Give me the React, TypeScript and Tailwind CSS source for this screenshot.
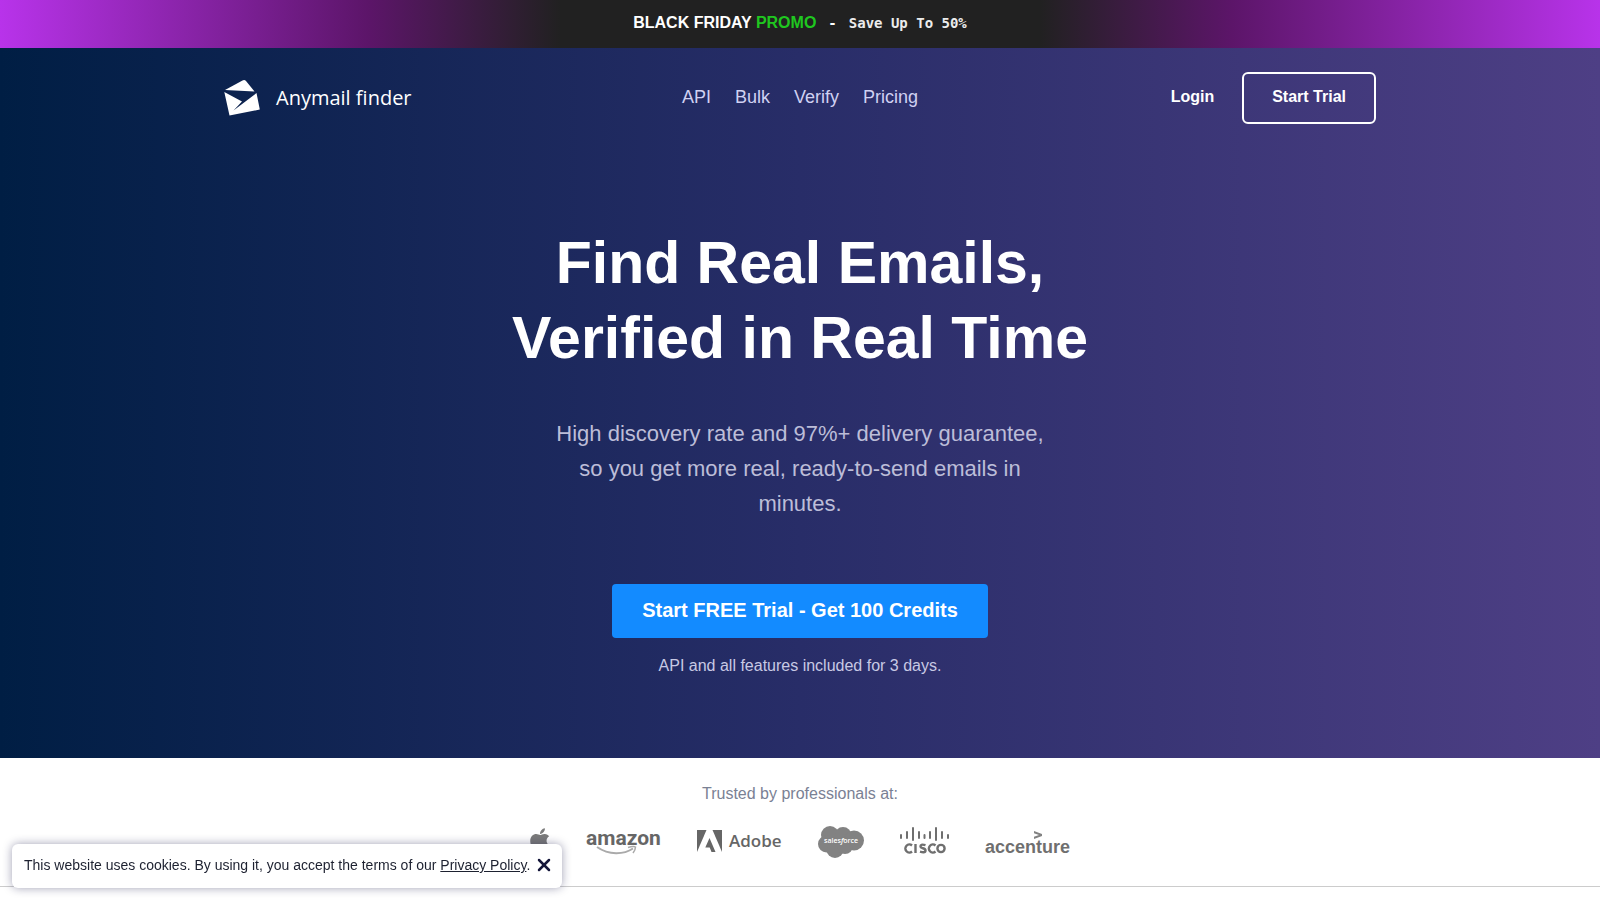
import { FaApple } from "react-icons/fa";
import { FiX } from "react-icons/fi";
import { useState } from "react";

const navLinks = ["API", "Bulk", "Verify", "Pricing"];

const PromoBanner = () => {
    return <a href="#promo" className="flex h-12 items-center justify-center bg-[linear-gradient(to_right,#b833ea_0%,#5c1569_23%,#212121_35%,#212121_65%,#5c1569_77%,#b833ea_100%)] pb-0.5 text-white">
        <span className="font-bold">BLACK FRIDAY <span className="text-[#1fc71f]">PROMO</span></span>
        <span className="ml-3 font-['DejaVu_Sans_Mono',monospace] text-sm font-bold">-</span>
        <span className="ml-3 font-['DejaVu_Sans_Mono',monospace] text-sm font-bold text-[#ececec]">Save Up To 50%</span>
    </a>
}

const Logo = () => {
    return <a href="#home" className="flex items-center gap-4 text-white">
        <svg width="36" height="36" viewBox="0 0 36 36" fill="currentColor" aria-hidden="true">
            <path d="M1 10 18.500 .5Q20.500-.5 22 1L30.500 11.500Z" />
            <path d="M.3 12 18 21.500 9.500 30.500 32.500 13 35.800 29.500 5.500 35.500Z" />
        </svg>
        <span className="font-['Open_Sans',sans-serif] text-xl">Anymail finder</span>
    </a>
}

const Header = () => {
    return <header className="mx-auto grid max-w-6xl grid-cols-3 items-center">
        <Logo />
        <nav className="flex justify-center gap-6 pb-0.5 text-lg text-[#d0d1f2]">
            {navLinks.map((link) => <a key={link} href={`#${link.toLowerCase()}`}>{link}</a>)}
        </nav>
        <div className="flex items-center justify-end gap-7 font-bold text-white">
            <a href="#login" className="pb-0.5">Login</a>
            <button type="button" className="h-13 rounded-md border-2 border-white px-7 pb-0.5">Start Trial</button>
        </div>
    </header>
}

const Hero = () => {
    return <div className="mt-[102px] flex flex-col items-center px-4 text-center">
        <h1 className="text-[59px] leading-[75px] font-bold text-white">
            Find Real Emails,<br />Verified in Real Time
        </h1>
        <p className="mt-10 max-w-lg text-[22px] leading-[35px] text-[#bcbdd8]">
            High discovery rate and 97%+ delivery guarantee, so you get more real, ready-to-send emails in minutes.
        </p>
        <button type="button" className="mt-[63px] h-[54px] rounded bg-[#138bff] px-[30px] pb-0.5 text-xl font-bold text-white">
            Start FREE Trial - Get 100 Credits
        </button>
        <p className="mt-4 text-base text-[#c8c9e4]">API and all features included for 3 days.</p>
    </div>
}

const AmazonLogo = () => {
    return <svg width="75" height="32" viewBox="0 0 75 32" role="img" aria-label="amazon">
        <text x="0" y="19" fontSize="21" fontWeight="700" fill="#666" className="font-['Roboto',sans-serif]">amazon</text>
        <path d="M11 21C23 29.500 38 28.500 47 22.500" fill="none" stroke="#aaa" strokeWidth="2" />
        <path d="M42 21.500C45 20.500 48 20 49.500 21 49.500 23 48.500 25 47 27" fill="none" stroke="#aaa" strokeWidth="1.500" />
    </svg>
}

const AdobeLogo = () => {
    return <svg width="85" height="32" viewBox="0 0 85 32" fill="#666" role="img" aria-label="Adobe">
        <path d="M0 4H9.500L0 26Z" />
        <path d="M15.500 4H25V26Z" />
        <path d="M12.500 12 18.500 26H14.500L12.700 21.500H8.300Z" />
        <text x="32" y="21" fontSize="17" fontWeight="600" className="font-['Open_Sans',sans-serif]">Adobe</text>
    </svg>
}

const SalesforceLogo = () => {
    return <svg width="46" height="32" viewBox="0 0 46 32" fill="#828282" role="img" aria-label="salesforce">
        <circle cx="12" cy="9" r="9" />
        <circle cx="25" cy="9.500" r="8.500" />
        <circle cx="36" cy="14.500" r="10" />
        <circle cx="8.500" cy="18" r="8.500" />
        <circle cx="17" cy="23.500" r="8.500" />
        <circle cx="27" cy="20" r="8" />
        <text x="6" y="17" fontSize="7" fontWeight="600" fill="#fff" className="font-['Open_Sans',sans-serif]">sales<tspan fontStyle="italic">f</tspan>orce</text>
    </svg>
}

const CiscoLogo = () => {
    return <svg width="49" height="32" viewBox="0 0 49 32" role="img" aria-label="cisco">
        <path d="M1 9V12M7 6V12M13 2V14M19 6V12M24.500 9V12M30 6V12M36 2V14M42 6V12M48 9V12" stroke="#6f6f6f" strokeWidth="2" strokeLinecap="round" />
        <g fill="none" stroke="#6f6f6f" strokeWidth="2.400">
            <path d="M12 19.500A4 4 0 1 0 12 25.500M15.500 18V27M25.500 19.200C21.500 18 20.500 19 20.500 20.300 20.500 23 25.500 21.500 25.500 24.500 25.500 27 22 26.200 20 25.600M35.500 19.500A4 4 0 1 0 35.500 25.500" />
            <circle cx="41" cy="22.500" r="3.600" />
        </g>
    </svg>
}

const AccentureLogo = () => {
    return <svg width="85" height="32" viewBox="0 0 85 32" fill="#6f6f6f" role="img" aria-label="accenture">
        <path d="M49 5 57 8V10L49 13V10.800L54 9 49 7.200Z" fill="#828282" />
        <text x="0" y="27" fontSize="18" fontWeight="700">accenture</text>
    </svg>
}

const TrustedBy = () => {
    return <section className="flex flex-col items-center border-b border-[#ccc] pt-6 pb-7">
        <p className="text-base text-[#7a8194]">Trusted by professionals at:</p>
        <div className="mt-5 flex flex-wrap items-center justify-center gap-9">
            <FaApple className="h-7 w-5 self-start text-[#7b7b7b]" aria-label="Apple" />
            <AmazonLogo />
            <AdobeLogo />
            <SalesforceLogo />
            <CiscoLogo />
            <AccentureLogo />
        </div>
    </section>
}

const CookieNotice = () => {
    const [open, setOpen] = useState(true);

    if (!open) return null;

    return <div className="fixed bottom-3 left-3 flex h-11 items-center gap-1 rounded-md bg-white pr-2 pb-0.5 pl-3 text-sm text-[#1d2130] shadow-[0_0_10px_rgba(20,20,70,0.4)]">
        <p>This website uses cookies. By using it, you accept the terms of our <a href="#privacy" className="underline">Privacy Policy</a>.</p>
        <button type="button" aria-label="Close" onClick={() => setOpen(false)}>
            <FiX className="size-5 stroke-3 text-[#14163a]" />
        </button>
    </div>
}

export default function App() {
    return <div className="bg-white font-['Liberation_Sans',Arial,sans-serif]">
        <PromoBanner />
        <div className="bg-[linear-gradient(to_right,#001e44_0%,#282d68_50%,#4e3f85_100%)] px-4 pt-6 pb-20">
            <Header />
            <Hero />
        </div>
        <TrustedBy />
        <CookieNotice />
    </div>
}
